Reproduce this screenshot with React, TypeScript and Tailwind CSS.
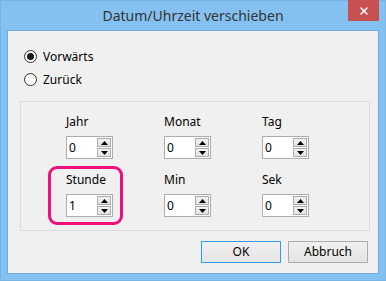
import { X } from 'lucide-react';

function Radio({ label, checked }: { label: string; checked?: boolean }) {
  return (
    <div className="flex h-[13px] items-center gap-[6px]">
      <div className="flex h-[13px] w-[13px] items-center justify-center rounded-full border border-[#333333] bg-gradient-to-b from-[#f4f4f4] to-white">
        {checked && <div className="h-[7px] w-[7px] rounded-full bg-[#1a1a1a]" />}
      </div>
      <span className="text-[12px] leading-[16px] text-black">{label}</span>
    </div>
  );
}

function Arrow({ up }: { up?: boolean }) {
  return (
    <svg width="7" height="4" viewBox="0 0 7 4">
      <polygon points={up ? '0,4 7,4 3.5,0' : '0,0 7,0 3.5,4'} fill="#000" />
    </svg>
  );
}

function Spin({ value }: { value: string }) {
  return (
    <div className="flex h-[23px] w-[47px] border border-[#abadb3] bg-white">
      <div className="flex-1 pl-[2px] text-[12px] leading-[21px] text-black">{value}</div>
      <div className="my-[1px] mr-[1px] flex w-[14px] flex-col gap-[1px]">
        <div className="flex flex-1 items-center justify-center border border-[#acacac] bg-gradient-to-b from-[#f2f2f2] to-[#e3e3e3]">
          <Arrow up />
        </div>
        <div className="flex flex-1 items-center justify-center border border-[#acacac] bg-gradient-to-b from-[#f2f2f2] to-[#e3e3e3]">
          <Arrow />
        </div>
      </div>
    </div>
  );
}

function Field({ label, value, marked }: { label: string; value: string; marked?: boolean }) {
  return (
    <div className="relative flex flex-col gap-[6px]">
      {marked && (
        <div className="absolute -left-[18px] -top-[6px] h-[59px] w-[75px] rounded-[9px] border-[3px] border-[#ee0f7b]" />
      )}
      <span className="h-[16px] text-[12px] leading-[16px] text-black">{label}</span>
      <Spin value={value} />
    </div>
  );
}

export default function App() {
  return (
    <div className="flex h-[281px] w-[386px] flex-col border border-[#79b2e4] bg-[#85c1f0] font-['Noto_Sans',sans-serif]">
      <div className="relative flex h-[29px] items-center justify-center">
        <span className="text-[14px] text-[#333333]">Datum/Uhrzeit verschieben</span>
        <div className="absolute -top-[1px] right-[6px] flex h-[21px] w-[31px] items-center justify-center bg-[#c75050]">
          <X size={12} strokeWidth={3} color="#fff" />
        </div>
      </div>

      <div className="mx-[6px] mb-[6px] flex flex-1 flex-col border border-[#71a8dc] bg-[#f0f0f0] pl-[12px] pr-[8px]">
        <div className="flex flex-col gap-[10px] pl-[4px] pt-[19px]">
          <Radio label="Vorwärts" checked />
          <Radio label="Zurück" />
        </div>

        <div className="mt-[15px] grid grid-cols-[98px_98px_98px] gap-y-[13px] border border-[#dcdcdc] pb-[13px] pl-[45px] pt-[12px]">
          <Field label="Jahr" value="0" />
          <Field label="Monat" value="0" />
          <Field label="Tag" value="0" />
          <Field label="Stunde" value="1" marked />
          <Field label="Min" value="0" />
          <Field label="Sek" value="0" />
        </div>

        <div className="mt-[10px] flex justify-end gap-[7px] pr-[2px]">
          <button className="h-[22px] w-[80px] border border-[#3399ff] bg-gradient-to-b from-[#f0f0f0] to-[#e5e5e5] text-[12px] text-black">
            OK
          </button>
          <button className="h-[22px] w-[80px] border border-[#acacac] bg-gradient-to-b from-[#f0f0f0] to-[#e5e5e5] text-[12px] text-black">
            Abbruch
          </button>
        </div>
      </div>
    </div>
  );
}
